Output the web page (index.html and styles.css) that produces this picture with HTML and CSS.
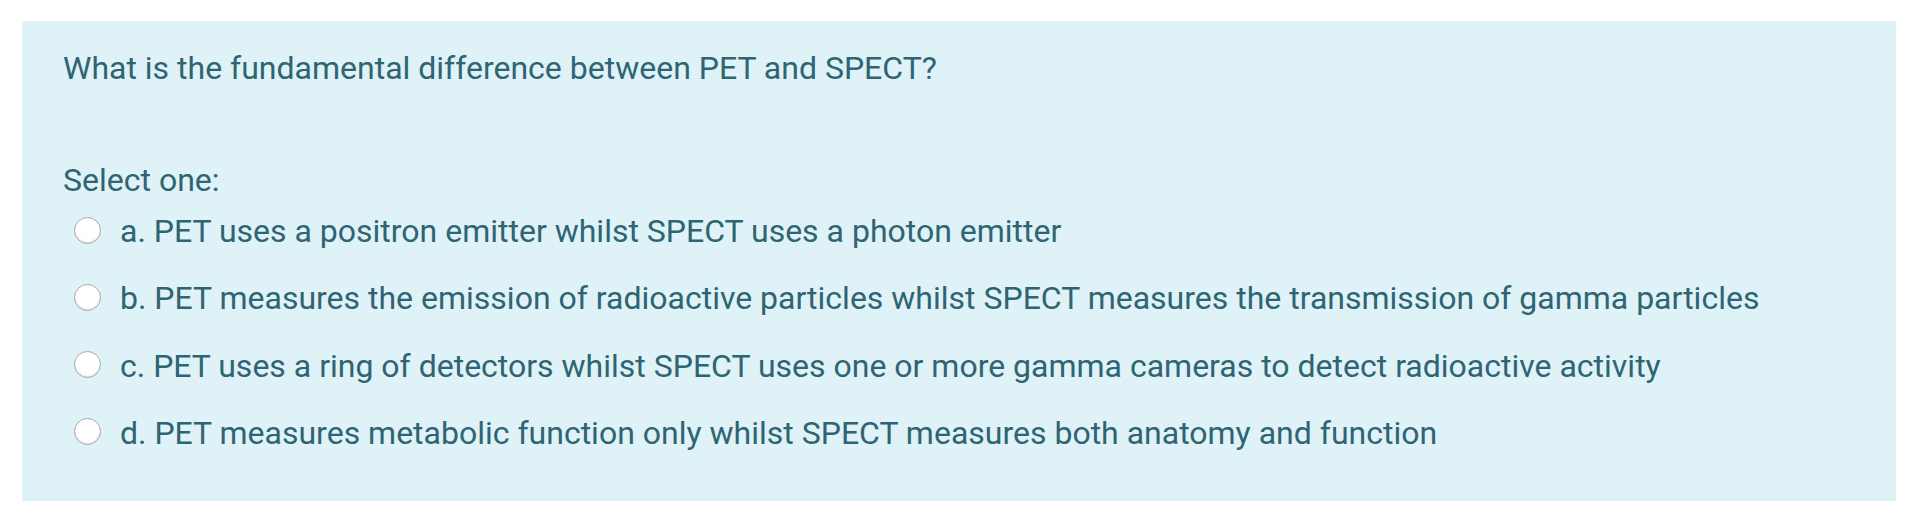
FILE: index.html
```html
<!DOCTYPE html>
<html lang="en">
<head>
<meta charset="utf-8">
<title>Question</title>
<link rel="stylesheet" href="styles.css">
</head>
<body>
<div class="formulation">
  <div class="qtext">What is the fundamental difference between PET and SPECT?</div>
  <div class="ablock">
    <div class="prompt">Select one:</div>
    <div class="answer">
      <label class="option"><span class="radio"></span><span class="label">a. PET uses a positron emitter whilst SPECT uses a photon emitter</span></label>
      <label class="option"><span class="radio"></span><span class="label">b. PET measures the emission of radioactive particles whilst SPECT measures the transmission of gamma particles</span></label>
      <label class="option"><span class="radio"></span><span class="label">c. PET uses a ring of detectors whilst SPECT uses one or more gamma cameras to detect radioactive activity</span></label>
      <label class="option"><span class="radio"></span><span class="label">d. PET measures metabolic function only whilst SPECT measures both anatomy and function</span></label>
    </div>
  </div>
</div>
</body>
</html>
```
FILE: styles.css
```css
html, body {
  margin: 0;
  padding: 0;
  background: #ffffff;
}
body {
  padding: 21px 18px 15px 22px;
  font-family: Roboto, "Liberation Sans", sans-serif;
  font-size: 32px;
  line-height: 48px;
  color: #2f6473;
}
.formulation {
  background: #def2f8;
  width: 1874px;
  height: 480px;
  box-sizing: border-box;
  padding: 23px 40px 0 41px;
}
.qtext {
  margin: 0;
}
.ablock {
  margin-top: 64px;
}
.prompt {
  margin-bottom: 3px;
}
.answer {
  display: flex;
  flex-direction: column;
  gap: 19.3px;
  padding-left: 11px;
}
.option {
  display: flex;
  align-items: center;
  height: 48px;
}
.radio {
  flex: none;
  width: 27px;
  height: 27px;
  box-sizing: border-box;
  border-radius: 50%;
  border: 1px solid #a8a8a8;
  background: radial-gradient(circle at 50% 40%, #ffffff 55%, #f1f1f1 100%);
  box-shadow: inset 0 -1px 1px rgba(0,0,0,0.08);
  margin-right: 19px;
  position: relative;
  top: -1px;
}
.label {
  white-space: nowrap;
}
```
